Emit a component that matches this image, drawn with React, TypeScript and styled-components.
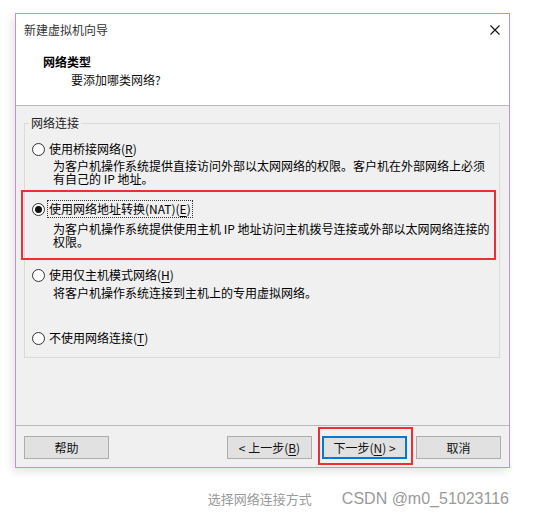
import React from 'react';
import styled, { createGlobalStyle } from 'styled-components';

const Global = createGlobalStyle`
  html, body { margin: 0; padding: 0; background: #fff; }
  body {
    font-family: "Noto Sans CJK SC", "Microsoft YaHei", sans-serif;
    font-size: 12px;
    color: #000;
  }
`;

const Page = styled.div`
  width: 554px;
  height: 518px;
  box-sizing: border-box;
  padding: 13px 0 0 15px;
  background: #fff;
  overflow: hidden;
`;

const Window = styled.div`
  width: 495px;
  height: 455px;
  box-sizing: border-box;
  border: 1px solid #c190d6;
  display: flex;
  flex-direction: column;
  background: #f0f0f0;
  box-shadow: -3px 4px 8px rgba(0, 0, 0, 0.1);
`;

const TitleBar = styled.div`
  flex: none;
  height: 32px;
  background: #fff;
  display: flex;
  align-items: center;
  justify-content: space-between;
  padding: 0 9px 0 8px;
  color: #333;
  line-height: 16px;
`;

const CloseIcon = styled.svg`
  width: 10px;
  height: 10px;
  display: block;
`;

const Header = styled.div`
  flex: none;
  height: 59px;
  box-sizing: border-box;
  background: #fff;
  padding: 8px 0 0 27px;
`;

const HeaderTitle = styled.div`
  font-weight: 700;
  line-height: 16px;
`;

const HeaderSub = styled.div`
  line-height: 16px;
  margin-top: 2px;
  padding-left: 28px;
  color: #111;
`;

const Rule = styled.div`
  flex: none;
  height: 1px;
  background: #b9b9b9;
`;

const Body = styled.div`
  flex: 1;
  padding: 10px 9px 0 8px;
`;

const Group = styled.fieldset`
  margin: 0;
  padding: 11px 4px 11px 7px;
  border: 1px solid #dadada;
  min-width: 0;
`;

const Legend = styled.legend`
  padding: 0 2px;
  margin-left: -3px;
  line-height: 14px;
  color: #222;
`;

const Option = styled.div<{ $gap: number; $marked?: boolean }>`
  position: relative;
  margin-top: ${(p) => p.$gap}px;
  ${(p) =>
    p.$marked
      ? `
    &::after {
      content: "";
      position: absolute;
      left: -11px;
      right: -1px;
      top: -11px;
      bottom: -12px;
      border: 2px solid #ee2d35;
      pointer-events: none;
    }
  `
      : ''}
`;

const OptionRow = styled.div`
  display: flex;
  align-items: center;
  height: 16px;
  line-height: 16px;
`;

const Radio = styled.span<{ $checked?: boolean }>`
  flex: none;
  width: 13px;
  height: 13px;
  box-sizing: border-box;
  border: 1px solid #333;
  border-radius: 50%;
  background: #fff;
  display: flex;
  align-items: center;
  justify-content: center;
  margin-right: 3px;
  &::before {
    content: "";
    width: 7px;
    height: 7px;
    border-radius: 50%;
    background: ${(p) => (p.$checked ? '#111' : 'transparent')};
  }
`;

const Label = styled.span<{ $focused?: boolean }>`
  padding: 0 1px;
  outline: ${(p) => (p.$focused ? '1px dotted #333' : 'none')};
  outline-offset: 0;
`;

const Key = styled.span`
  text-decoration: underline;
  text-underline-offset: 2px;
`;

const Desc = styled.div<{ $top: number }>`
  margin-top: ${(p) => p.$top}px;
  padding-left: 21px;
  line-height: 13px;
`;

const Footer = styled.div`
  flex: none;
  height: 41px;
  box-sizing: border-box;
  padding: 10px 8px 0 8px;
  display: flex;
  align-items: flex-start;
`;

const Button = styled.div<{ $primary?: boolean; $marked?: boolean }>`
  position: relative;
  width: 85px;
  height: 23px;
  box-sizing: border-box;
  border: ${(p) => (p.$primary ? '2px solid #0078d7' : '1px solid #adadad')};
  background: #e1e1e1;
  display: flex;
  align-items: center;
  justify-content: center;
  line-height: 16px;
  color: #111;
  ${(p) =>
    p.$marked
      ? `
    &::after {
      content: "";
      position: absolute;
      left: -6px;
      right: -8px;
      top: -11px;
      bottom: -8px;
      border: 2px solid #ee2d35;
      pointer-events: none;
    }
  `
      : ''}
`;

const Spacer = styled.div`
  flex: 1;
`;

const ButtonGap = styled.div<{ $w: number }>`
  width: ${(p) => p.$w}px;
  flex: none;
`;

const Caption = styled.div`
  margin-top: 21px;
  height: 20px;
  display: flex;
  align-items: center;
  justify-content: flex-end;
  padding-right: 45px;
  gap: 30px;
`;

const CaptionText = styled.span`
  font-size: 13px;
  color: #9a9a9a;
  line-height: 20px;
`;

const Credit = styled.span`
  font-family: "Liberation Sans", Arial, sans-serif;
  font-size: 16px;
  color: #9a9a9a;
  line-height: 20px;
`;

export default function App() {
  return (
    <>
      <Global />
      <Page>
        <Window>
          <TitleBar>
            <span>新建虚拟机向导</span>
            <CloseIcon viewBox="0 0 10 10">
              <path d="M0.5 0.5 L9.5 9.5 M9.5 0.5 L0.5 9.5" stroke="#111" strokeWidth="1.1" fill="none" />
            </CloseIcon>
          </TitleBar>
          <Header>
            <HeaderTitle>网络类型</HeaderTitle>
            <HeaderSub>要添加哪类网络?</HeaderSub>
          </Header>
          <Rule />
          <Body>
            <Group>
              <Legend>网络连接</Legend>
              <Option $gap={0}>
                <OptionRow>
                  <Radio />
                  <Label>
                    使用桥接网络(<Key>R</Key>)
                  </Label>
                </OptionRow>
                <Desc $top={2}>
                  为客户机操作系统提供直接访问外部以太网网络的权限。客户机在外部网络上必须有自己的 IP 地址。
                </Desc>
              </Option>
              <Option $gap={16} $marked>
                <OptionRow>
                  <Radio $checked />
                  <Label $focused>
                    使用网络地址转换(NAT)(<Key>E</Key>)
                  </Label>
                </OptionRow>
                <Desc $top={5}>
                  为客户机操作系统提供使用主机 IP 地址访问主机拨号连接或外部以太网网络连接的权限。
                </Desc>
              </Option>
              <Option $gap={19}>
                <OptionRow>
                  <Radio />
                  <Label>
                    使用仅主机模式网络(<Key>H</Key>)
                  </Label>
                </OptionRow>
                <Desc $top={3}>将客户机操作系统连接到主机上的专用虚拟网络。</Desc>
              </Option>
              <Option $gap={31}>
                <OptionRow>
                  <Radio />
                  <Label>
                    不使用网络连接(<Key>T</Key>)
                  </Label>
                </OptionRow>
              </Option>
            </Group>
          </Body>
          <Rule />
          <Footer>
            <Button>帮助</Button>
            <Spacer />
            <Button>
              &lt; 上一步(<Key>B</Key>)
            </Button>
            <ButtonGap $w={10} />
            <Button $primary $marked>
              下一步(<Key>N</Key>) &gt;
            </Button>
            <ButtonGap $w={9} />
            <Button>取消</Button>
          </Footer>
        </Window>
        <Caption>
          <CaptionText>选择网络连接方式</CaptionText>
          <Credit>CSDN @m0_51023116</Credit>
        </Caption>
      </Page>
    </>
  );
}
